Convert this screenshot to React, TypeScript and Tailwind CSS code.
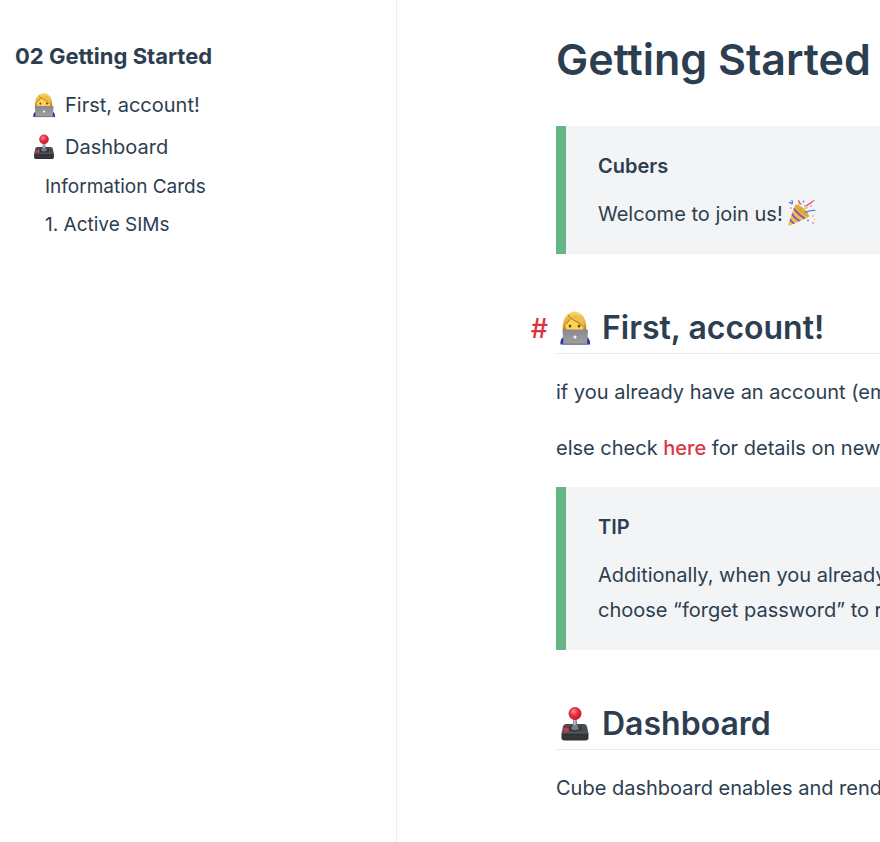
import React from 'react';

const Technologist = ({ className }: { className: string }) => (
  <svg viewBox="0 0 60 68" className={className} aria-hidden="true">
    <defs>
      <linearGradient id="hair" x1="0" y1="0" x2="0" y2="1">
        <stop offset="0" stopColor="#fbdc6c" />
        <stop offset="0.6" stopColor="#dba737" />
        <stop offset="1" stopColor="#9a6718" />
      </linearGradient>
      <linearGradient id="lid" x1="0" y1="0" x2="0" y2="1">
        <stop offset="0" stopColor="#8a8a8e" />
        <stop offset="1" stopColor="#a0a0a3" />
      </linearGradient>
    </defs>
    <path d="M1 67c-1-8 2-14 8-16h43c5 2 9 8 8 16z" fill="#2530b8" />
    <path d="M6 44C3 20 11 2 29 1c18 1 26 19 23 43z" fill="url(#hair)" />
    <path d="M11 27c4-4 7-8 10-13 8 8 18 9 26 17 0 9-6 18-18 18s-19-11-18-22z" fill="#ffd452" />
    <path d="M21 14c8 8 19 9 27 19 1-10-3-19-11-23-6-3-13-1-16 4z" fill="#efbd48" />
    <path d="M17 8c2 10 21 12 30 24M21 15c-3 5-7 9-10 12" fill="none" stroke="#a8741d" strokeWidth="2" />
    <ellipse cx="20" cy="30" rx="2.6" ry="3" fill="#5b4228" />
    <ellipse cx="38" cy="30" rx="2.6" ry="3" fill="#5b4228" />
    <path d="M8 37h45c2 0 3 1 3 3l-2 26H7L5 40c0-2 1-3 3-3z" fill="url(#lid)" />
    <path d="M4 65h53v2H4z" fill="#77777b" />
    <circle cx="30" cy="52" r="3" fill="#f4f4f6" />
  </svg>
);

const Joystick = ({ className }: { className: string }) => (
  <svg viewBox="0 0 60 68" className={className} aria-hidden="true">
    <defs>
      <radialGradient id="ball" cx="0.4" cy="0.35" r="0.65">
        <stop offset="0" stopColor="#ff8d94" />
        <stop offset="0.45" stopColor="#ea3346" />
        <stop offset="1" stopColor="#bd1730" />
      </radialGradient>
      <linearGradient id="stick" x1="0" y1="0" x2="1" y2="0">
        <stop offset="0" stopColor="#5e646b" />
        <stop offset="0.45" stopColor="#c3c8cc" />
        <stop offset="1" stopColor="#555b62" />
      </linearGradient>
    </defs>
    <path d="M12 34h36c3 0 5 2 6 5l3 14H3l3-14c1-3 3-5 6-5z" fill="#484c52" />
    <path d="M3 52h54v10c0 3-2 5-6 5H9c-4 0-6-2-6-5z" fill="#303338" />
    <path d="M4 52h52" stroke="#646970" strokeWidth="1.5" />
    <path d="M9 60h42" stroke="#4c5056" strokeWidth="1.5" strokeDasharray="3 3" />
    <ellipse cx="30" cy="43" rx="13" ry="6" fill="#2f3338" />
    <path d="M27 22h6l2 19c1 3-11 3-10 0z" fill="url(#stick)" />
    <path d="M24 38c3-3 9-3 12 0l2 6c-4 3-12 3-16 0z" fill="#777d84" />
    <path d="M9 42h7c2 0 3 1 2 3l-1 4H6l1-5c0-1 1-2 2-2z" fill="#e8303d" />
    <circle cx="30" cy="13" r="13" fill="url(#ball)" />
  </svg>
);

const Party = ({ className }: { className: string }) => (
  <svg viewBox="0 0 56 54" className={className} aria-hidden="true">
    <defs>
      <clipPath id="cone">
        <path d="M14 12c8-2 29 16 28 24L4 53c-3 1-4-1-3-4z" />
      </clipPath>
    </defs>
    <g clipPath="url(#cone)">
      <path d="M0 0h56v54H0z" fill="#f0bf4c" />
      <path d="M10 17c6 8 13 16 24 22M6 28c5 7 10 12 18 17M3 40c3 4 6 7 10 10" fill="none" stroke="#8454b8" strokeWidth="4" />
    </g>
    <path d="M14 12c8-3 29 15 28 24-7 1-28-15-28-24z" fill="#dda936" />
    <path d="M20 14c2-3 4-6 2-10M29 22c5-1 6-6 11-5" fill="none" stroke="#edc158" strokeWidth="3" />
    <path d="M33 26c7 1 9-5 22-3M2 8c5-4 3 4 7 1l-1-7" fill="none" stroke="#4c84e8" strokeWidth="2.5" />
    <path d="M20 3c5 1 1 6 7 8M36 13c5 1 3-4 8-4 4 0 2-5 9-6" fill="none" stroke="#e85362" strokeWidth="2.5" />
    <circle cx="31" cy="5" r="1.8" fill="#4c84e8" />
    <circle cx="6" cy="18" r="1.6" fill="#e85362" />
    <circle cx="34" cy="14" r="1.6" fill="#8454b8" />
    <circle cx="46" cy="14" r="1.6" fill="#e85362" />
    <circle cx="50" cy="34" r="2" fill="#f3bd45" />
    <circle cx="40" cy="43" r="1.8" fill="#4c84e8" />
    <circle cx="50" cy="48" r="1.8" fill="#f08a94" />
    <circle cx="53" cy="41" r="1.4" fill="#f3bd45" />
  </svg>
);

const Tip = ({ title, children }: { title: string; children: React.ReactNode }) => (
  <div className="border-l-[10px] border-[#65b587] bg-[#f3f4f5] pl-8 pt-6 pb-[22px]">
    <p className="font-semibold leading-8">{title}</p>
    <p className="mt-[15px] leading-[35px]">{children}</p>
  </div>
);

const Heading = ({ id, icon, children }: { id: string; icon: React.ReactNode; children: React.ReactNode }) => (
  <h2
    id={id}
    className="mt-[53px] mb-[21px] flex items-center gap-3 border-b border-[#eaecef] pb-1 pl-1 text-[32px] leading-[42px] font-semibold"
  >
    {icon}
    {children}
  </h2>
);

export default function App() {
  return (
    <div className="flex min-h-screen overflow-hidden bg-white font-['Inter',sans-serif] text-[20px] text-[#2c3e50]">
      <aside className="w-[397px] shrink-0 border-r border-[#eaecef] pt-[38px] pl-[15px]">
        <p className="mb-[10px] text-[22px] leading-9 font-bold">02 Getting Started</p>
        <nav>
          <a href="#account" className="flex items-center gap-[10px] pl-[18px] leading-[42px]">
            <Technologist className="h-[26px] w-[22px]" />
            First, account!
          </a>
          <a href="#dashboard" className="flex items-center gap-[10px] pl-[18px] leading-[42px]">
            <Joystick className="h-[26px] w-[22px]" />
            Dashboard
          </a>
          <a href="#cards" className="block pl-[30px] text-[19px] leading-[38px]">Information Cards</a>
          <a href="#sims" className="block pl-[30px] text-[19px] leading-[38px]">1. Active SIMs</a>
        </nav>
      </aside>

      <main className="min-w-0 flex-1 pt-8 pl-[159px] whitespace-nowrap">
        <h1 className="mb-10 text-[43px] leading-[54px] font-semibold">Getting Started</h1>
        <Tip title="Cubers">
          Welcome to join us! <Party className="inline-block h-[27px] w-7 align-[-5px]" />
        </Tip>

        <div className="relative">
          <a href="#account" className="absolute right-full bottom-1 pr-2 text-[27px] leading-[42px] font-medium text-[#da3545]">#</a>
          <Heading id="account" icon={<Technologist className="h-9 w-[30px]" />}>First, account!</Heading>
        </div>
        <p className="mb-[21px] leading-[35px]">if you already have an account (em</p>
        <p className="mb-[21px] leading-[35px]">
          else check <a href="#new" className="font-medium text-[#da3545]">here</a> for details on new
        </p>
        <Tip title="TIP">
          Additionally, when you already
          <br />
          choose “forget password” to re
        </Tip>

        <Heading id="dashboard" icon={<Joystick className="h-9 w-[30px]" />}>Dashboard</Heading>
        <p className="leading-[35px]">Cube dashboard enables and rende</p>
      </main>
    </div>
  );
}
